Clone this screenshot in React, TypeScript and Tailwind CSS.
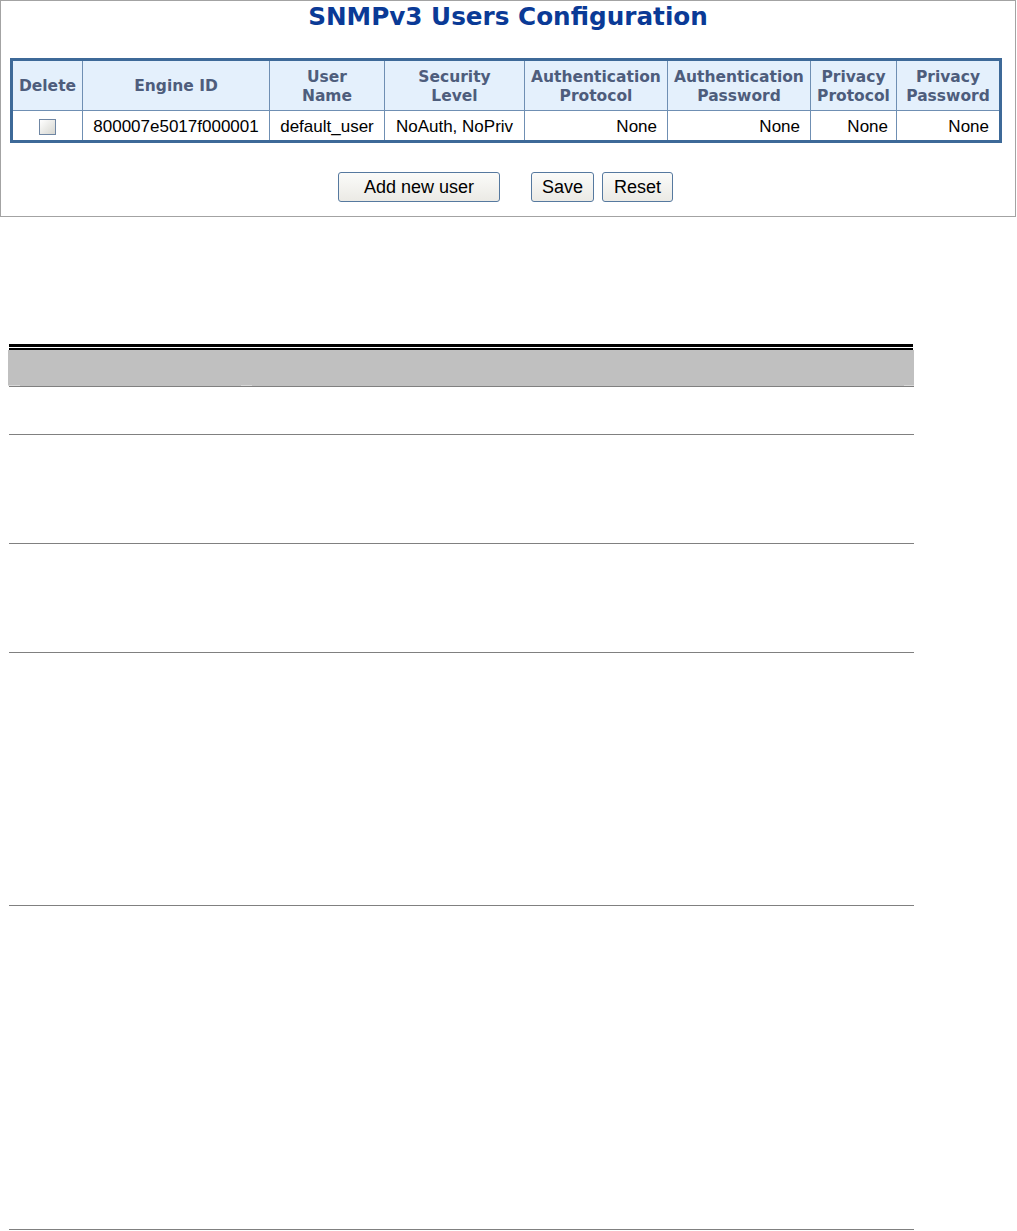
const columns = [
  { key: "del", head: ["Delete"], w: "w-[69px]" },
  { key: "eng", head: ["Engine ID"], w: "w-[186px]" },
  { key: "usr", head: ["User", "Name"], w: "w-[114px]" },
  { key: "sec", head: ["Security", "Level"], w: "w-[139px]" },
  { key: "ap", head: ["Authentication", "Protocol"], w: "w-[142px]" },
  { key: "apw", head: ["Authentication", "Password"], w: "w-[142px]" },
  { key: "pp", head: ["Privacy", "Protocol"], w: "w-[85px]" },
  { key: "ppw", head: ["Privacy", "Password"], w: "w-[102px]" },
]

const rowHeights = ["h-[47px]", "h-[108px]", "h-[108px]", "h-[252px]", "h-[323px]"]

function Btn({ label, w }: { label: string; w: string }) {
  return (
    <button
      className={`${w} h-[30px] rounded-[3px] border border-[#56799f] bg-gradient-to-b from-[#fbfbf9] to-[#ebeae5] text-[18px] leading-none text-black`}
    >
      {label}
    </button>
  )
}

export default function App() {
  return (
    <div className="w-[1017px] h-[1231px] bg-white font-['Liberation_Sans',Arial,sans-serif]">
      <div className="h-[217px] w-[1016px] border border-[#a3a3a3] pt-[1px]">
        <h1 className="h-[30px] text-center text-[24.7px] leading-[30px] font-bold text-[#0a3a96] font-['DejaVu_Sans',Verdana,sans-serif]">
          SNMPv3 Users Configuration
        </h1>

        <div className="ml-[9px] mt-[26px] w-[992px] border-[3px] border-[#3d6998] bg-[#6f8fb3]">
          <div className="flex gap-px">
            {columns.map((c) => (
              <div
                key={c.key}
                className={`${c.w} h-[49px] flex flex-col items-center justify-center pt-[2px] bg-[#e4f0fc] text-[15.5px] leading-[19px] font-bold text-[#4e5d7c] font-['DejaVu_Sans',Verdana,sans-serif]`}
              >
                {c.head.map((h) => (
                  <span key={h}>{h}</span>
                ))}
              </div>
            ))}
          </div>
          <div className="mt-px flex gap-px text-[17px] text-black">
            <div className="w-[69px] h-[29px] bg-white flex items-center justify-center pt-[2px]">
              <div className="w-[17px] h-[16px] border border-[#6f86a3] bg-gradient-to-br from-[#ffffff] to-[#d6d6d0]" />
            </div>
            <div className="w-[186px] h-[29px] bg-white flex items-center justify-center pt-[3px]">800007e5017f000001</div>
            <div className="w-[114px] h-[29px] bg-white flex items-center justify-center pt-[3px]">default_user</div>
            <div className="w-[139px] h-[29px] bg-white flex items-center justify-center pt-[3px]">NoAuth, NoPriv</div>
            <div className="w-[142px] h-[29px] bg-white flex items-center justify-end pt-[3px] pr-[10px]">None</div>
            <div className="w-[142px] h-[29px] bg-white flex items-center justify-end pt-[3px] pr-[10px]">None</div>
            <div className="w-[85px] h-[29px] bg-white flex items-center justify-end pt-[3px] pr-[8px]">None</div>
            <div className="w-[102px] h-[29px] bg-white flex items-center justify-end pt-[3px] pr-[10px]">None</div>
          </div>
        </div>

        <div className="mt-[29px] flex justify-center pr-[5px]">
          <Btn label="Add new user" w="w-[162px]" />
          <div className="ml-[31px] flex gap-[8px]">
            <Btn label="Save" w="w-[63px]" />
            <Btn label="Reset" w="w-[71px]" />
          </div>
        </div>
      </div>

      <div className="mt-[127px] ml-[8px] w-[906px]">
        <div className="ml-px w-[904px] h-[3px] bg-black" />
        <div className="ml-px mt-px w-[904px] h-[2px] bg-black" />
        <div className="h-[36px] bg-[#c0c0c0] flex items-end">
          <div className="h-px w-[12px] bg-[#d8d8d8]" />
          <div className="ml-[221px] h-px w-[11px] bg-[#d8d8d8]" />
          <div className="ml-auto h-px w-[10px] bg-[#d8d8d8]" />
        </div>
        <div className="ml-px w-[905px] h-px bg-[#808080]" />
        {rowHeights.map((h, i) => (
          <div key={i}>
            <div className={h} />
            <div className="ml-px w-[905px] h-px bg-[#808080]" />
          </div>
        ))}
      </div>
    </div>
  )
}
